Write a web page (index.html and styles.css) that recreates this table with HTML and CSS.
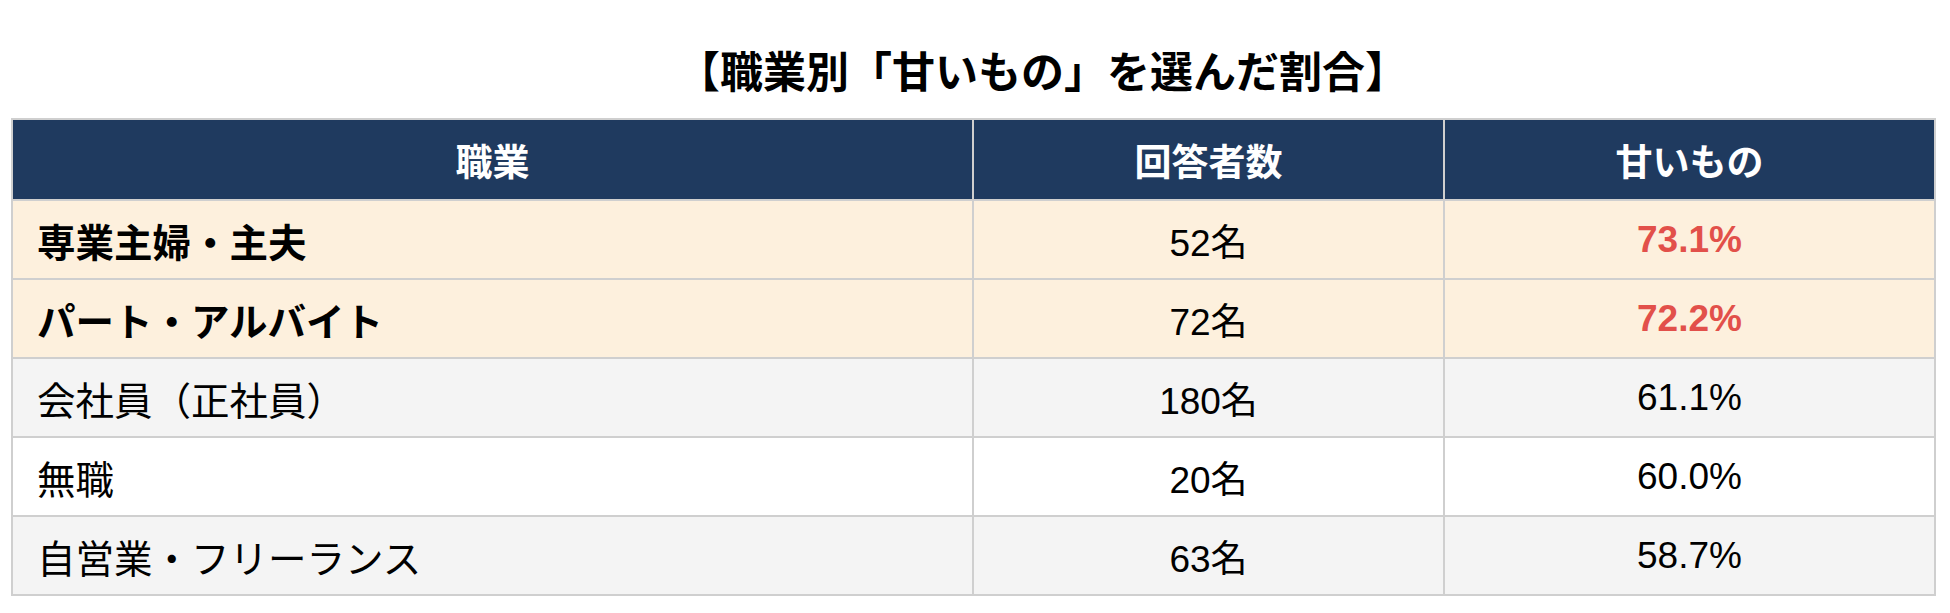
FILE: index.html
```html
<!DOCTYPE html>
<html lang="ja">
<head>
<meta charset="utf-8">
<title>職業別「甘いもの」を選んだ割合</title>
<link rel="stylesheet" href="styles.css">
</head>
<body>
<div class="wrap">
  <h2 class="title">【職業別「甘いもの」を選んだ割合】</h2>
  <table class="tbl">
    <colgroup>
      <col class="c1">
      <col class="c2">
      <col class="c3">
    </colgroup>
    <thead>
      <tr><th>職業</th><th>回答者数</th><th>甘いもの</th></tr>
    </thead>
    <tbody>
      <tr class="hl"><td class="job">専業主婦・主夫</td><td>52名</td><td class="pct">73.1%</td></tr>
      <tr class="hl"><td class="job">パート・アルバイト</td><td>72名</td><td class="pct">72.2%</td></tr>
      <tr class="gray"><td class="job">会社員（正社員）</td><td>180名</td><td>61.1%</td></tr>
      <tr class="white"><td class="job">無職</td><td>20名</td><td>60.0%</td></tr>
      <tr class="gray"><td class="job">自営業・フリーランス</td><td>63名</td><td>58.7%</td></tr>
    </tbody>
  </table>
</div>
</body>
</html>
```

FILE: styles.css
```css
html, body {
  margin: 0;
  padding: 0;
  background: #ffffff;
}
body {
  font-family: "Liberation Sans", "Noto Sans CJK JP", sans-serif;
  color: #000;
}
.wrap {
  padding: 0 16px 0 11px;
}
.title {
  margin: 0;
  padding: 48px 0 20px 140px;
  font-size: 43px;
  line-height: 50px;
  font-weight: bold;
  text-align: center;
}
.tbl {
  width: 1923px;
  table-layout: fixed;
  border-collapse: collapse;
  border: 2px solid #cfcfcf;
}
.c1 { width: 961px; }
.c2 { width: 471px; }
.c3 { width: 491px; }
.tbl th,
.tbl td {
  border: 2px solid #cfcfcf;
  padding: 0;
  font-size: 37px;
  text-align: center;
  vertical-align: middle;
}
.tbl th {
  height: 79px;
  background: #1f3a5f;
  color: #ffffff;
  font-weight: bold;
}
.tbl td {
  height: 77px;
}
.tbl td.job {
  text-align: left;
  padding-left: 24px;
  font-size: 38.5px;
}
.hl td {
  background: #fdf0dd;
}
.hl td.job {
  font-weight: bold;
}
.gray td {
  background: #f4f4f4;
}
.white td {
  background: #ffffff;
}
.pct {
  color: #e2504a;
  font-weight: bold;
}
```
